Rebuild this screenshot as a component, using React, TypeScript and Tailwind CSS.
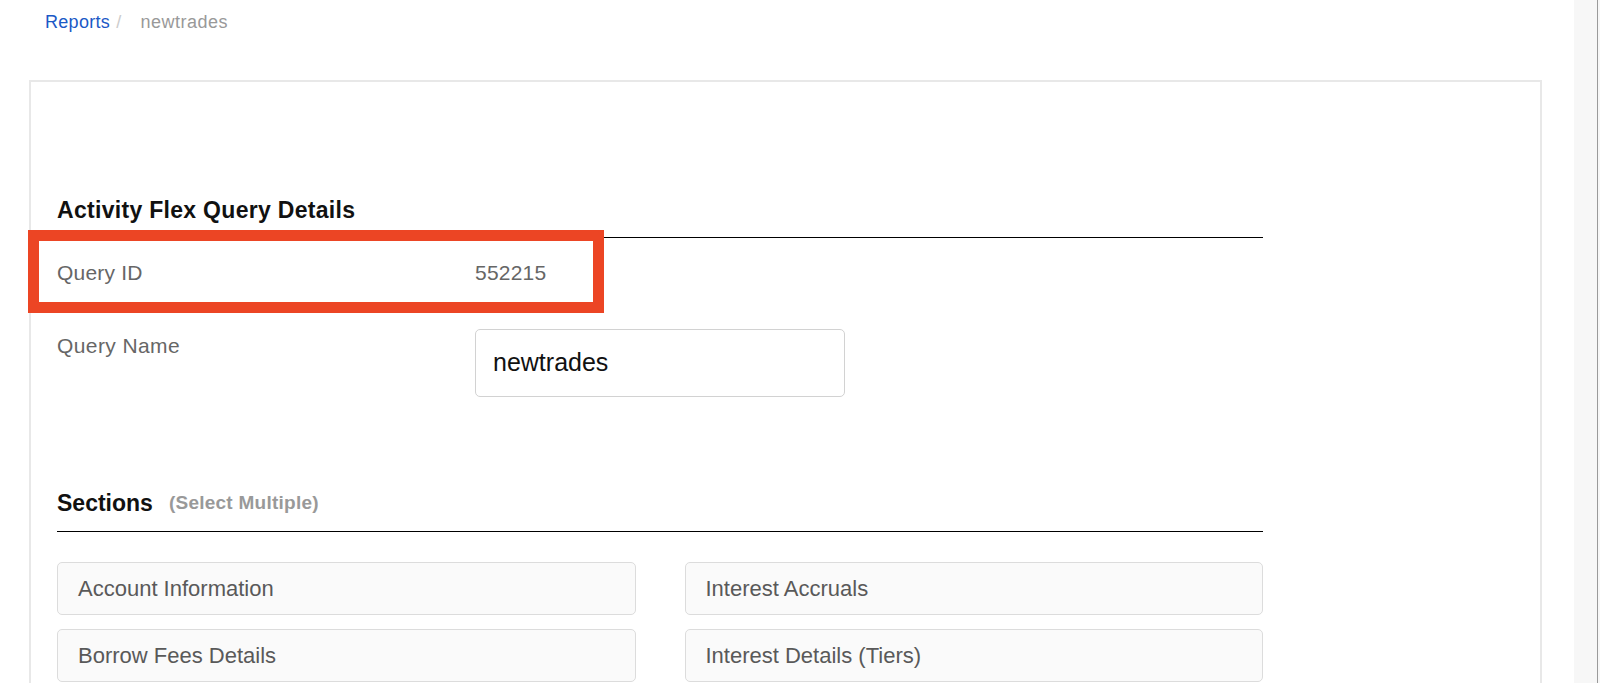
const sections = [
  'Account Information',
  'Interest Accruals',
  'Borrow Fees Details',
  'Interest Details (Tiers)',
]

function SectionBox({ label }: { label: string }) {
  return (
    <div className="h-[53px] flex items-center pl-[20px] rounded-[5px] border-[1.5px] border-[#dcdcdc] bg-[#fafafa] text-[22px] text-[#595959]">
      {label}
    </div>
  )
}

export default function App() {
  return (
    <div className="relative flex min-h-[683px] bg-white font-['Liberation_Sans',Arial,sans-serif] overflow-hidden">
      <div className="flex-1">
        {/* Breadcrumb */}
        <div className="h-[45px] flex items-center pl-[45px] text-[18px] tracking-[0.3px]">
          <span className="text-[#1b59c6]">Reports</span>
          <span className="ml-[6px] mr-[8px] text-[#cccccc]">/</span>
          <span className="ml-[11px] text-[#999] tracking-[0.5px]">newtrades</span>
        </div>

        {/* Panel */}
        <div className="mt-[35px] ml-[29px] w-[1513px] border-2 border-[#e8e8e8] pl-[26px] pt-[114px] pb-[60px]">
          <div className="w-[1206px]">
            <h2 className="text-[23px] leading-[28px] font-bold tracking-[0.3px] text-[#111] pb-[13px] border-b border-black">
              Activity Flex Query Details
            </h2>

            <div className="flex items-center h-[69px] text-[21px] text-[#666] tracking-[0.2px]">
              <div className="w-[418px]">Query ID</div>
              <div>552215</div>
            </div>

            <div className="flex items-start pt-[22px]">
              <div className="w-[418px] pt-[3px] text-[21px] leading-[28px] text-[#666] tracking-[0.4px]">Query Name</div>
              <div className="w-[370px] h-[68px] flex items-center pl-[17px] rounded-[5px] border border-[#d2d2d2] text-[25px] text-[#111]">
                newtrades
              </div>
            </div>

            <div className="mt-[92px] flex items-center leading-[28px] pb-[14px] border-b border-black">
              <span className="text-[23px] font-bold text-[#111]">Sections</span>
              <span className="ml-[16px] text-[19px] font-bold text-[#999] tracking-[0.25px]">(Select Multiple)</span>
            </div>

            <div className="mt-[30px] grid grid-cols-2 gap-x-[49px] gap-y-[14px]">
              {sections.map((s) => (
                <SectionBox key={s} label={s} />
              ))}
            </div>
          </div>
        </div>
      </div>

      {/* Right edge strip */}
      <div className="w-[26px] shrink-0 flex">
        <div className="flex-1 bg-[#f7f7f7]" />
        <div className="w-px bg-[#9a9a9a]" />
        <div className="w-[2px] bg-[#f7f7f7]" />
      </div>

      {/* Highlight annotation */}
      <div className="absolute left-[28px] top-[230px] w-[576px] h-[83px] border-[11px] border-[#ec4524]" />
    </div>
  )
}
